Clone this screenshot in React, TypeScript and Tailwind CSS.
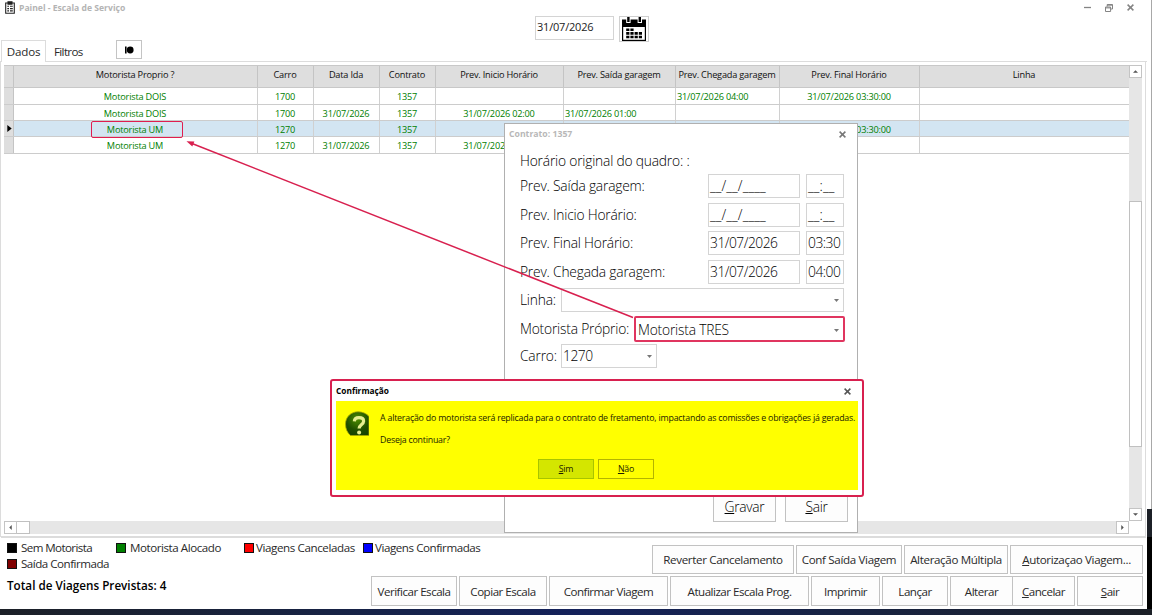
import React from 'react';
import clsx from 'clsx';

type Row = {
  motorista: string;
  carro: string;
  dataIda: string;
  contrato: string;
  inicio: string;
  saida: string;
  chegada: string;
  final: string;
  linha: string;
};

const COLUMNS: { key: keyof Row; label: string; width: string; left?: boolean }[] = [
  { key: 'motorista', label: 'Motorista Proprio ?', width: 'w-[244px]' },
  { key: 'carro', label: 'Carro', width: 'w-[56px]' },
  { key: 'dataIda', label: 'Data Ida', width: 'w-[66px]' },
  { key: 'contrato', label: 'Contrato', width: 'w-[56px]' },
  { key: 'inicio', label: 'Prev. Inicio Horário', width: 'w-[128px]' },
  { key: 'saida', label: 'Prev. Saída garagem', width: 'w-[112px]', left: true },
  { key: 'chegada', label: 'Prev. Chegada garagem', width: 'w-[104px]', left: true },
  { key: 'final', label: 'Prev. Final Horário', width: 'w-[140px]' },
  { key: 'linha', label: 'Linha', width: 'w-[209px]' },
];

const ROWS: Row[] = [
  { motorista: 'Motorista DOIS', carro: '1700', dataIda: '', contrato: '1357', inicio: '', saida: '', chegada: '31/07/2026 04:00', final: '31/07/2026 03:30:00', linha: '' },
  { motorista: 'Motorista DOIS', carro: '1700', dataIda: '31/07/2026', contrato: '1357', inicio: '31/07/2026 02:00', saida: '31/07/2026 01:00', chegada: '', final: '', linha: '' },
  { motorista: 'Motorista UM', carro: '1270', dataIda: '', contrato: '1357', inicio: '', saida: '', chegada: '', final: '31/07/2026 03:30:00', linha: '' },
  { motorista: 'Motorista UM', carro: '1270', dataIda: '31/07/2026', contrato: '1357', inicio: '31/07/2026 02:00', saida: '', chegada: '', final: '', linha: '' },
];

const ROW_HEIGHTS = ['h-[17px]', 'h-[16px]', 'h-[16px]', 'h-[17px]'];
const SELECTED = 2;

function CloseIcon({ className }: { className?: string }) {
  return (
    <svg viewBox="0 0 7 7" className={clsx('size-[7px]', className)} fill="none" stroke="currentColor" strokeWidth="1.5">
      <path d="M0.6 0.6L6.4 6.4M6.4 0.6L0.6 6.4" />
    </svg>
  );
}

function TitleBar() {
  return (
    <div className="flex h-[16px] shrink-0 items-center pb-px pl-[5px] text-[#b4b4b4]">
      <svg viewBox="0 0 10 13" className="h-[13px] w-[10px]" fill="none" stroke="#222" strokeWidth="1.1">
        <path d="M3 2H0.7V12.3H9.3V2H7" />
        <path d="M3 0.9H7V3.1H3Z" fill="#222" />
        <path d="M2.3 5.3H4M5 5.3H7.8M2.3 7.6H4M5 7.6H7.8M2.3 9.9H4M5 9.9H7.8" />
      </svg>
      <span className="ml-[4px] pt-px text-[8.6px] font-bold">Painel - Escala de Serviço</span>
      <div className="mr-[13px] ml-auto flex items-center text-[#848484]">
        <svg viewBox="0 0 7 7" className="size-[7px]" stroke="currentColor" strokeWidth="1.3">
          <path d="M0 3.5H7" />
        </svg>
        <svg viewBox="0 0 8 8" className="ml-[14px] size-[8px]" fill="none" stroke="currentColor">
          <path d="M2.2 2.5V0.5H7.5V5H5.8M2 1.2H7.5" />
          <path d="M0.5 3H5.6V7.5H0.5ZM0.5 3.9H5.6" />
        </svg>
        <CloseIcon className="ml-[14px]" />
      </div>
    </div>
  );
}

function CalendarButton() {
  return (
    <button className="ml-[5px] flex h-[26px] w-[30px] shrink-0 justify-center border border-[#d0d0d0]">
      <svg viewBox="0 0 24 24" className="size-[24px] shrink-0">
        <path d="M0 2.5H24V24H0Z" fill="#000" />
        <path d="M1.2 10H22.8V22.8H1.2Z" fill="#fff" />
        <path d="M4.2 0H8.6V6H4.2ZM15.6 0H20V6H15.6Z" fill="#fff" />
        <path d="M5.2 0H7.6V5H5.2ZM16.6 0H19V5H16.6Z" fill="#000" />
        <g fill="#000">
          <path d="M4.2 11.5h3.2v2.6H4.2zM8.4 11.5h3.2v2.6H8.4z" />
          <path d="M4.2 15.1h3.2v2.6H4.2zM8.4 15.1h3.2v2.6H8.4zM12.6 15.1h3.2v2.6h-3.2zM16.8 15.1H20v2.6h-3.2z" />
          <path d="M4.2 18.7h3.2v2.6H4.2zM8.4 18.7h3.2v2.6H8.4zM12.6 18.7h3.2v2.6h-3.2zM16.8 18.7H20v2.6h-3.2z" />
        </g>
      </svg>
    </button>
  );
}

function Tabs() {
  return (
    <div className="flex h-[22px] shrink-0 items-end border-b border-[#dcdcdc] pl-[1px] text-[11.6px] text-[#2a2a2a]">
      <div className="-mb-px flex h-[22px] w-[45px] items-center justify-center border border-b-0 border-[#dcdcdc] bg-white tracking-[-0.15px]">Dados</div>
      <div className="ml-[8px] flex h-[21px] items-center pt-[2px] tracking-[-0.65px]">Filtros</div>
      <button className="mb-[2px] ml-[33px] flex h-[19px] w-[26px] items-center justify-center border border-[#c4c4c4]">
        <svg viewBox="0 0 10 8" className="h-[8px] w-[10px]">
          <path d="M1 0.5H2.6V7.5H1Z" />
          <circle cx="6.2" cy="4" r="3.4" />
        </svg>
      </button>
    </div>
  );
}

function Grid() {
  return (
    <div className="flex-1 text-[9.2px] tracking-[-0.2px] text-[#101010]">
      <div className="flex h-[23px] border-y border-[#c8c8c8] bg-[#dedede]">
        <div className="w-[10px] border-r border-[#c4c4c4]" />
        {COLUMNS.map((col) => (
          <div key={col.key} className={clsx('flex items-center justify-center border-r border-[#c4c4c4] pr-px pb-[4px] whitespace-nowrap last:border-r-0', col.width)}>
            {col.label}
          </div>
        ))}
      </div>
      {ROWS.map((row, i) => (
        <div key={i} className={clsx('flex border-b border-[#cccccc] text-[#008000]', ROW_HEIGHTS[i], i === SELECTED && 'bg-[#d3e5f2]')}>
          <div className="flex w-[10px] items-center justify-center border-r border-[#c4c4c4] bg-[#dedede]">
            {i === SELECTED && (
              <svg viewBox="0 0 5 8" className="ml-[2px] h-[7px] w-[5px]">
                <path d="M0 0L5 4L0 8Z" />
              </svg>
            )}
          </div>
          {COLUMNS.map((col) => (
            <div
              key={col.key}
              className={clsx('flex items-center border-r border-[#d0d0d0] pt-[2px] leading-[12px] whitespace-nowrap last:border-r-0', col.width, col.left ? 'pl-[1px]' : 'justify-center pr-px')}
            >
              {i === SELECTED && col.key === 'motorista' ? (
                <span className="relative">
                  {row[col.key]}
                  <span className="absolute -top-[3px] -right-[20px] -bottom-[2px] -left-[16px] rounded-[2px] border-[1.5px] border-[#e01e50]" />
                </span>
              ) : (
                row[col.key]
              )}
            </div>
          ))}
        </div>
      ))}
    </div>
  );
}

function ScrollArrow({ d, className }: { d: string; className?: string }) {
  return (
    <div className={clsx('flex size-[13px] shrink-0 items-center justify-center border border-[#c4c4c4] bg-white', className)}>
      <svg viewBox="0 0 6 6" className="size-[5px]" fill="#555">
        <path d={d} />
      </svg>
    </div>
  );
}

function VerticalScroll() {
  return (
    <div className="flex w-[13px] flex-col bg-[#e6e6e6]">
      <ScrollArrow d="M0 4.5L3 1.5L6 4.5Z" />
      <div className="mt-[123px] h-[246px] border border-[#c0c0c0] bg-white" />
      <ScrollArrow d="M0 1.5L3 4.5L6 1.5Z" className="mt-auto" />
    </div>
  );
}

function HorizontalScroll() {
  return (
    <div className="mr-[13px] flex h-[13px] shrink-0 bg-[#e6e6e6]">
      <ScrollArrow d="M4.5 0L1.5 3L4.5 6Z" />
      <div className="w-[13px] border border-l-0 border-[#c0c0c0] bg-white" />
      <ScrollArrow d="M1.5 0L4.5 3L1.5 6Z" className="ml-auto" />
    </div>
  );
}

function Legend({ color, label, className, gap = 'gap-[4px]' }: { color: string; label: string; className?: string; gap?: string }) {
  return (
    <div className={clsx('flex shrink-0 items-center', gap, className)}>
      <span className={clsx('size-[10px] shrink-0 border border-[#111]', color)} />
      <span className="whitespace-nowrap">{label}</span>
    </div>
  );
}

function FooterButton({ label, hotkey, width }: { label: string; hotkey?: boolean; width: string }) {
  return (
    <button className={clsx('flex items-center justify-center border border-[#c2c2c2] bg-[#fdfdfd] pt-px whitespace-nowrap', width)}>
      {hotkey ? (
        <span>
          <u>{label[0]}</u>
          {label.slice(1)}
        </span>
      ) : (
        label
      )}
    </button>
  );
}

function Footer() {
  return (
    <div className="mx-px flex h-[72px] shrink-0 border-t border-[#dcdcdc] pl-[6px] text-[11.6px] tracking-[-0.35px] text-[#2a2a2a]">
      <div className="w-[363px]">
        <div className="flex h-[16px] pt-[3px]">
          <Legend color="bg-black" label="Sem Motorista" className="w-[109px] tracking-[-0.6px]" />
          <Legend color="bg-[#008000]" label="Motorista Alocado" className="w-[128px] tracking-[-0.45px]" />
          <Legend color="bg-[#ff0000]" label="Viagens Canceladas" className="w-[119px] tracking-[-0.4px]" gap="gap-[2px]" />
          <Legend color="bg-[#0000ff]" label="Viagens Confirmadas" className="tracking-[-0.45px]" gap="gap-[2px]" />
        </div>
        <div className="flex h-[16px] pt-[3px]">
          <Legend color="bg-[#800000]" label="Saída Confirmada" className="tracking-[-0.5px]" />
        </div>
        <div className="mt-[7px] text-[11.7px] leading-[17px] font-semibold tracking-normal text-black">Total de Viagens Previstas: 4</div>
      </div>
      <div className="flex flex-1 flex-col items-end pt-[7px] pr-[3px]">
        <div className="flex h-[29px] gap-[2px]">
          <FooterButton label="Reverter Cancelamento" width="w-[142px]" />
          <FooterButton label="Conf Saída Viagem" width="w-[106px]" />
          <FooterButton label="Alteração Múltipla" width="w-[104px]" />
          <FooterButton label="Autorizaçao Viagem..." hotkey width="w-[133px]" />
        </div>
        <div className="mt-[2px] flex h-[30px] tracking-[-0.5px]">
          <div className="flex gap-[2px]">
            <FooterButton label="Verificar Escala" width="w-[86px]" />
            <FooterButton label="Copiar Escala" width="w-[88px]" />
            <FooterButton label="Confirmar Viagem" width="w-[119px]" />
            <FooterButton label="Atualizar Escala Prog." width="w-[139px]" />
            <FooterButton label="Imprimir" width="w-[69px]" />
            <FooterButton label="Lançar" width="w-[66px]" />
            <FooterButton label="Alterar" width="w-[63px]" />
          </div>
          <FooterButton label="Cancelar" hotkey width="-ml-px w-[63px]" />
          <FooterButton label="Sair" hotkey width="ml-[2px] w-[66px]" />
        </div>
      </div>
    </div>
  );
}

function Caret() {
  return (
    <svg viewBox="0 0 5 3" className="mr-[4px] ml-auto h-[3px] w-[5px]" fill="#777">
      <path d="M0 0H5L2.5 3Z" />
    </svg>
  );
}

function Field({ value, className, caret }: { value: string; className?: string; caret?: boolean }) {
  return (
    <div className={clsx('flex h-[24px] items-center border border-[#d4d4d4] bg-white pt-px pl-[1px] whitespace-nowrap', value.startsWith('_') ? 'tracking-[0.1px]' : 'tracking-[-0.5px]', className)}>
      {value}
      {caret && <Caret />}
    </div>
  );
}

function TimeRow({ label, date, time, className }: { label: string; date: string; time: string; className?: string }) {
  return (
    <div className={clsx('flex items-center', className)}>
      <span className="w-[188px] pt-px whitespace-nowrap">{label}</span>
      <Field value={date} className="w-[92px]" />
      <Field value={time} className="ml-[6px] w-[38px]" />
    </div>
  );
}

function ContractDialog() {
  return (
    <div className="absolute top-[123px] left-[504px] flex h-[410px] w-[354px] flex-col border border-[#b0b0b0] bg-white text-[13.8px] font-light tracking-[-0.2px] text-black">
      <div className="flex h-[20px] items-center pr-[11px] pl-[4px] text-[#b8b8b8]">
        <span className="pt-px text-[8.7px] font-bold tracking-normal">Contrato: 1357</span>
        <CloseIcon className="ml-auto text-[#777]" />
      </div>
      <div className="flex flex-1 flex-col pl-[15px]">
        <div className="mt-[7px] h-[20px] leading-[20px]">Horário original do quadro: :</div>
        <TimeRow label="Prev. Saída garagem:" date="__/__/____" time="__:__" className="mt-[3px]" />
        <TimeRow label="Prev. Inicio Horário:" date="__/__/____" time="__:__" className="mt-[5px]" />
        <TimeRow label="Prev. Final Horário:" date="31/07/2026" time="03:30" className="mt-[4px]" />
        <TimeRow label="Prev. Chegada garagem:" date="31/07/2026" time="04:00" className="mt-[5px]" />
        <div className="mt-[4px] flex items-center">
          <span className="w-[41px] pt-px">Linha:</span>
          <Field value="" caret className="w-[283px]" />
        </div>
        <div className="mt-[4px] flex items-center">
          <span className="w-[114px]">Motorista Próprio:</span>
          <div className="flex h-[26px] w-[211px] items-center rounded-[2px] border-2 border-[#e0355f] pt-[2px] pl-[2px]">
            Motorista TRES
            <Caret />
          </div>
        </div>
        <div className="mt-[2px] flex items-center">
          <span className="w-[41px]">Carro:</span>
          <Field value="1270" caret className="w-[96px]" />
        </div>
        <div className="mt-auto mr-[9px] mb-[10px] flex h-[30px] justify-end gap-[9px] tracking-[-0.3px]">
          <FooterButton label="Gravar" hotkey width="w-[63px]" />
          <FooterButton label="Sair" hotkey width="w-[63px]" />
        </div>
      </div>
    </div>
  );
}

function QuestionIcon() {
  return (
    <svg viewBox="0 0 24 25" className="h-[25px] w-[24px] shrink-0">
      <defs>
        <radialGradient id="ball" cx="0.5" cy="0.3" r="0.8">
          <stop offset="0" stopColor="#4f8f00" />
          <stop offset="0.6" stopColor="#1f4f00" />
          <stop offset="1" stopColor="#164000" />
        </radialGradient>
      </defs>
      <path d="M24 24.5H5.5C2 21.5 0.5 17.5 0.5 13C0.5 6 6 0.8 13 0.8C17.5 0.8 21.5 2.5 24 5.5Z" fill="url(#ball)" stroke="#a8a800" strokeWidth="0.8" />
      <path d="M9.3 10.4C9.5 7.7 11.6 6.7 14 6.7C16.7 6.7 18.6 7.9 18.6 10.2C18.6 13.5 14.1 13.4 14.1 17.6" fill="none" stroke="#e6ee90" strokeWidth="3.2" />
      <circle cx="14.1" cy="21.6" r="2" fill="#e6ee90" />
    </svg>
  );
}

function ConfirmDialog() {
  return (
    <div className="absolute top-[379px] left-[329.5px] flex h-[117.5px] w-[534.5px] flex-col rounded-[3px] border-2 border-[#d8204f] bg-white px-[4.5px] pb-[4.5px]">
      <div className="flex h-[20px] shrink-0 items-center pr-[7px] text-black">
        <span className="text-[8.3px] font-bold">Confirmação</span>
        <CloseIcon className="ml-auto text-[#555]" />
      </div>
      <div className="flex flex-1 flex-col bg-[#ffff00] pt-[10px] text-[8.8px] tracking-[-0.2px] text-[#1c1c00]">
        <div className="flex pl-[9px]">
          <QuestionIcon />
          <div className="ml-[11px] pt-[2px] leading-[11px] whitespace-nowrap">
            <p>A alteração do motorista será replicada para o contrato de fretamento, impactando as comissões e obrigações já geradas.</p>
            <p className="mt-[11px]">Deseja continuar?</p>
          </div>
        </div>
        <div className="mt-[13px] flex gap-[4px] pl-[202px]">
          <button className="h-[20px] w-[56px] border border-[#a8c400] bg-[#d4e600] pt-px">
            <u>S</u>im
          </button>
          <button className="h-[20px] w-[56px] border border-[#b4b400] pt-px">
            <u>N</u>ão
          </button>
        </div>
      </div>
    </div>
  );
}

export default function App() {
  return (
    <div className="relative flex h-[615px] w-[1152px] flex-col overflow-hidden bg-white font-['Open_Sans','Noto_Sans',sans-serif]">
      <div className="flex h-[609px] shrink-0">
        <div className="flex w-[1147px] flex-col">
          <TitleBar />
          <div className="flex h-[24px] shrink-0 pl-[535px]">
            <div className="h-[24px] w-[79px] border border-[#d4d4d4] pl-[1px] text-[11px] leading-[20px] tracking-[-0.2px] text-[#222]">31/07/2026</div>
            <CalendarButton />
          </div>
          <Tabs />
          <div className="mr-[1px] flex flex-1 flex-col border-x border-[#dcdcdc] pt-[3px] pr-[3px] pl-[3px]">
            <div className="flex flex-1">
              <Grid />
              <VerticalScroll />
            </div>
            <HorizontalScroll />
            <div className="-mx-[3px] mt-[2px] h-px bg-[#dcdcdc]" />
          </div>
          <Footer />
        </div>
        <div className="flex flex-1 flex-col">
          <div className="h-[509px] border-r border-[#a8a8a8]" />
          <div className="h-[28px] bg-[#1c2027]" />
          <div className="flex-1 bg-black" />
        </div>
      </div>
      <div className="h-[6px] bg-linear-to-r from-[#1c2027] via-[#14215a] to-[#1c2027]" />

      <ContractDialog />

      <svg viewBox="0 0 1152 615" className="pointer-events-none absolute inset-0 size-full">
        <path d="M633 317.5L192 143.5" stroke="#d8204f" strokeWidth="1.5" />
        <path d="M186.5 141.2L194.4 141.4L192.3 146.5Z" fill="#d8204f" />
      </svg>

      <ConfirmDialog />
    </div>
  );
}
